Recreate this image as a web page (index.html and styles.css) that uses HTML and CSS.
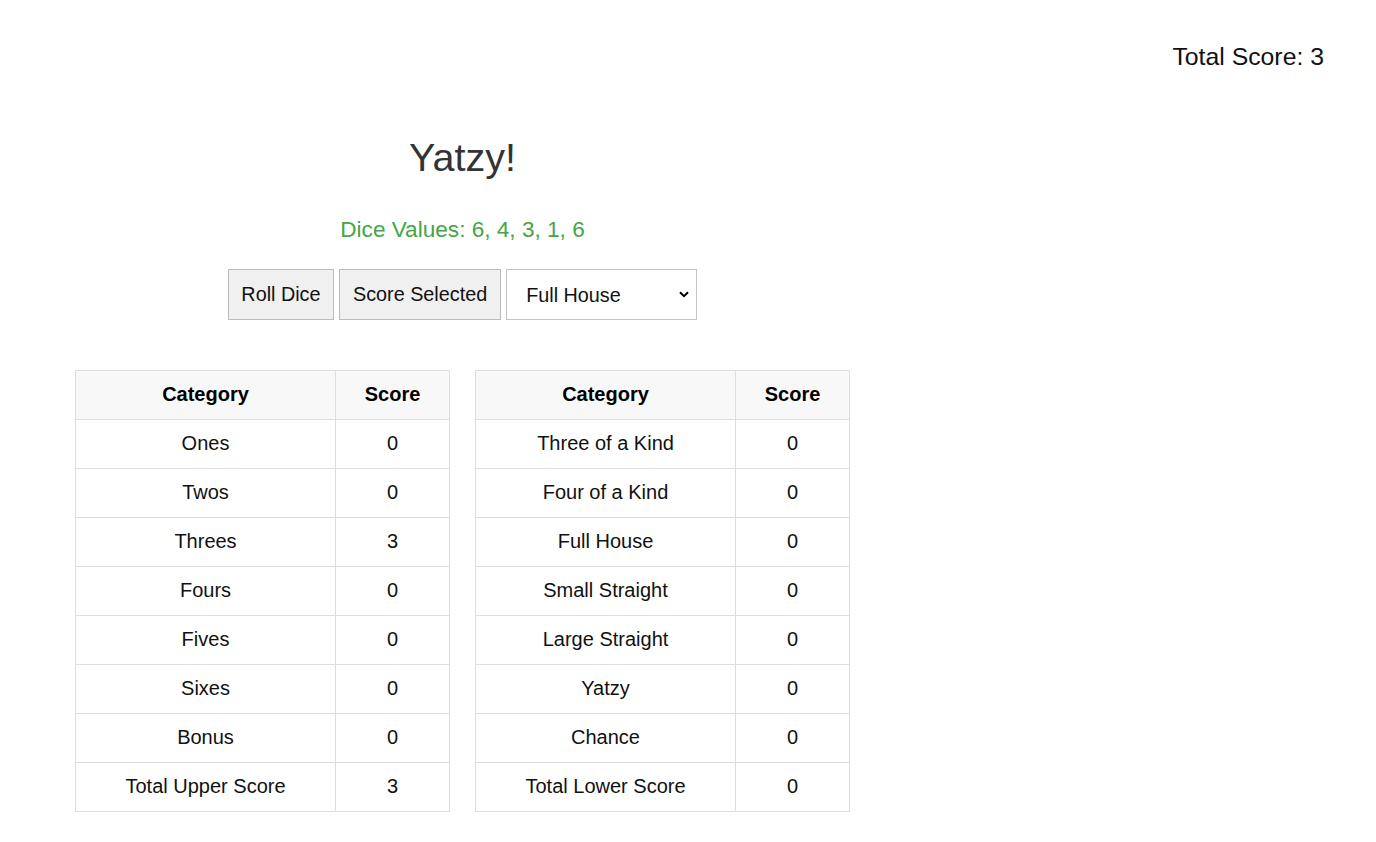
FILE: index.html
```html
<!DOCTYPE html>
<html lang="en">
<head>
<meta charset="utf-8">
<title>Yatzy!</title>
<link rel="stylesheet" href="styles.css">
</head>
<body>
<header class="topbar">
  <div class="total-score">Total Score: 3</div>
</header>
<main class="game">
  <h1 class="title">Yatzy!</h1>
  <p class="dice">Dice Values: 6, 4, 3, 1, 6</p>
  <div class="controls">
    <button class="btn" type="button">Roll Dice</button>
    <button class="btn" type="button">Score Selected</button>
    <span class="select-wrap">
      <select class="select">
        <option>Ones</option>
        <option>Twos</option>
        <option>Threes</option>
        <option>Fours</option>
        <option>Fives</option>
        <option>Sixes</option>
        <option>Three of a Kind</option>
        <option>Four of a Kind</option>
        <option selected>Full House</option>
        <option>Small Straight</option>
        <option>Large Straight</option>
        <option>Yatzy</option>
        <option>Chance</option>
      </select>
      <svg class="chevron" width="10" height="7" viewBox="0 0 10 7" aria-hidden="true"><path d="M1 1.2 L5 5.2 L9 1.2" fill="none" stroke="#000" stroke-width="2"/></svg>
    </span>
  </div>
  <div class="tables">
    <table class="score-table">
      <colgroup><col class="col-cat"><col class="col-score"></colgroup>
      <thead><tr><th>Category</th><th>Score</th></tr></thead>
      <tbody>
        <tr><td>Ones</td><td>0</td></tr>
        <tr><td>Twos</td><td>0</td></tr>
        <tr><td>Threes</td><td>3</td></tr>
        <tr><td>Fours</td><td>0</td></tr>
        <tr><td>Fives</td><td>0</td></tr>
        <tr><td>Sixes</td><td>0</td></tr>
        <tr><td>Bonus</td><td>0</td></tr>
        <tr><td>Total Upper Score</td><td>3</td></tr>
      </tbody>
    </table>
    <table class="score-table">
      <colgroup><col class="col-cat"><col class="col-score"></colgroup>
      <thead><tr><th>Category</th><th>Score</th></tr></thead>
      <tbody>
        <tr><td>Three of a Kind</td><td>0</td></tr>
        <tr><td>Four of a Kind</td><td>0</td></tr>
        <tr><td>Full House</td><td>0</td></tr>
        <tr><td>Small Straight</td><td>0</td></tr>
        <tr><td>Large Straight</td><td>0</td></tr>
        <tr><td>Yatzy</td><td>0</td></tr>
        <tr><td>Chance</td><td>0</td></tr>
        <tr><td>Total Lower Score</td><td>0</td></tr>
      </tbody>
    </table>
  </div>
</main>
</body>
</html>
```

FILE: styles.css
```css
html, body {
  margin: 0;
  padding: 0;
  background: #fff;
}

body {
  font-family: "Liberation Sans", Arial, sans-serif;
  color: #111;
}

.topbar {
  display: flex;
  justify-content: flex-end;
  padding: 43px 52px 0 0;
}

.total-score {
  font-size: 24.8px;
  line-height: 28px;
  color: #111;
}

.game {
  width: 775px;
  margin-left: 75px;
  display: flex;
  flex-direction: column;
  align-items: center;
}

.title {
  margin: 63px 0 0;
  font-size: 39.5px;
  line-height: 46px;
  font-weight: normal;
  color: #333;
}

.dice {
  margin: 37px 0 0;
  font-size: 22.6px;
  line-height: 26px;
  color: #45a545;
}

.controls {
  margin-top: 26px;
  display: flex;
  gap: 5px;
  align-items: stretch;
}

.btn {
  font-family: "Liberation Sans", Arial, sans-serif;
  font-size: 19.8px;
  line-height: 23px;
  padding: 13px 13px;
  background: #f0f0f0;
  border: 1px solid #bcbcbc;
  border-radius: 0;
  color: #111;
  margin: 0;
}

.btn:first-child {
  padding: 13px 12.5px;
}

.select-wrap {
  position: relative;
  display: inline-flex;
}

.select {
  -webkit-appearance: none;
  appearance: none;
  width: 191px;
  height: 51px;
  margin: 0;
  padding: 0 30px 0 19px;
  font-family: "Liberation Sans", Arial, sans-serif;
  font-size: 19.8px;
  color: #111;
  background: #fff;
  border: 1px solid #c3c3c3;
  border-radius: 0;
}

.chevron {
  position: absolute;
  right: 8px;
  top: 22px;
  pointer-events: none;
}

.tables {
  margin-top: 50px;
  display: flex;
  gap: 25px;
  align-self: stretch;
}

.score-table {
  width: 374px;
  table-layout: fixed;
  border-collapse: collapse;
  font-size: 20px;
  line-height: 22px;
  color: #111;
}

.col-cat {
  width: 260px;
}

.col-score {
  width: 114px;
}

.score-table th,
.score-table td {
  border: 1px solid #dedede;
  padding: 12px 0 14px;
  text-align: center;
}

.score-table th {
  background: #f8f8f8;
  font-weight: bold;
  color: #000;
}
```
